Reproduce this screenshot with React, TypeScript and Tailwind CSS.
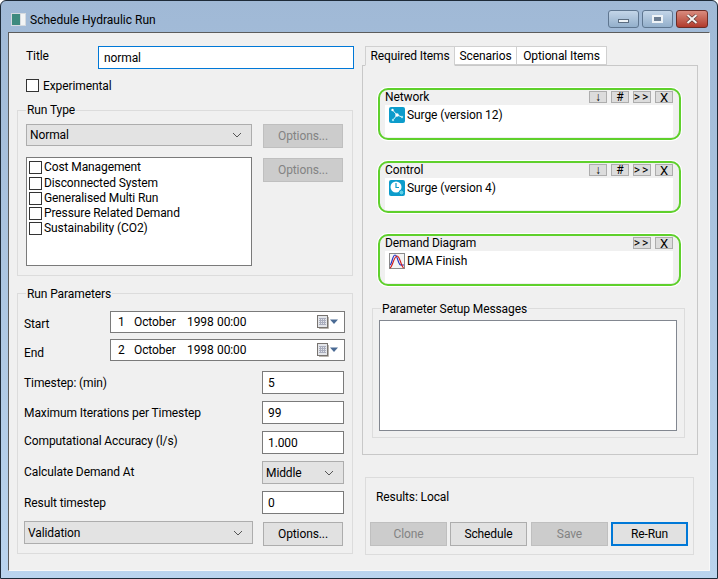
import type { ReactNode } from "react";

const Chevron = () => (
  <svg width="10" height="6" viewBox="0 0 10 6" className="shrink-0">
    <path d="M1 1l4 4 4-4" fill="none" stroke="#555" strokeWidth="1" />
  </svg>
);

const Check = ({ className = "" }: { className?: string }) => (
  <span className={`block w-[13px] h-[13px] shrink-0 bg-white border border-[#333] ${className}`} />
);

const Btn = ({ label, disabled, primary, className = "" }: { label: string; disabled?: boolean; primary?: boolean; className?: string }) => (
  <div
    className={`flex items-center justify-center h-[24px] shrink-0 border ${
      disabled
        ? "bg-[#cccccc] border-[#bfbfbf] text-[#838383]"
        : primary
          ? "bg-[#e1e1e1] border-2 border-[#0078d7] text-black"
          : "bg-[#e1e1e1] border-[#adadad] text-black"
    } ${className}`}
  >
    {label}
  </div>
);

const Select = ({ label, className = "" }: { label: string; className?: string }) => (
  <div className={`flex items-center justify-between bg-[#e3e3e3] border border-[#adadad] pl-[3px] pr-[9px] shrink-0 ${className}`}>
    <span>{label}</span>
    <Chevron />
  </div>
);

const TextBox = ({ value }: { value: string }) => (
  <div className="flex items-center w-[82px] h-[23px] bg-white border border-[#7a7a7a] pl-[5px] ml-auto">{value}</div>
);

const Group = ({ label, className = "", labelClass = "-top-[8px]", children }: { label: string; className?: string; labelClass?: string; children: ReactNode }) => (
  <div className={`relative border border-[#dcdcdc] ${className}`}>
    <span className={`absolute left-[8px] bg-[#f0f0f0] px-px ${labelClass}`}>{label}</span>
    {children}
  </div>
);

const CalendarIcon = () => (
  <svg width="22" height="14" viewBox="0 0 22 14" className="shrink-0">
    <rect x="0.5" y="0.5" width="10" height="12" fill="#e4e6ea" stroke="#77736f" />
    <path d="M11.5 2v11.5H2" fill="none" stroke="#b8b4ae" />
    <path d="M2 3.500h7M2 5.500h7M2 7.500h7M2 9.500h7M3.500 3v7M5.500 3v7M7.500 3v7" stroke="#a9adbd" strokeWidth="1" />
    <path d="M13 4.500h8l-4 4.500z" fill="#4a6a94" />
  </svg>
);

const DateBox = ({ day }: { day: string }) => (
  <div className="flex items-center w-[235px] h-[22px] bg-white border border-[#7a7a7a] pl-[7px] pr-[5px] ml-auto">
    <span className="w-[16px]">{day}</span>
    <span className="w-[53px]">October</span>
    <span className="w-[30px]">1998</span>
    <span>00:00</span>
    <span className="ml-auto flex"><CalendarIcon /></span>
  </div>
);

const Row = ({ label, children, width = "w-[320px]", labelClass = "" }: { label: string; children: ReactNode; width?: string; labelClass?: string }) => (
  <div className={`flex items-center ${width}`}>
    <span className={labelClass}>{label}</span>
    {children}
  </div>
);

const SmallBtn = ({ label, className = "" }: { label: string; className?: string }) => (
  <span className={`flex items-center justify-center w-[18px] h-[12px] bg-[#dcdcdc] border border-[#adadad] leading-none ${className}`}>
    {label}
  </span>
);

const NetworkIcon = () => (
  <svg width="16" height="16" viewBox="0 0 16 16" className="shrink-0">
    <rect width="16" height="16" rx="2" fill="#0c9ccb" />
    <path d="M3.500 3L8 8l5 2M8 8l-4 5" fill="none" stroke="#e8f8fc" strokeWidth="1" />
    <circle cx="8" cy="8" r="1.800" fill="#fff" />
    <circle cx="3.500" cy="3" r="1.200" fill="#fff" />
    <circle cx="13" cy="10" r="1.200" fill="#9fe4f2" />
    <circle cx="4" cy="13" r="1.200" fill="#9fe4f2" />
  </svg>
);

const ClockIcon = () => (
  <svg width="16" height="16" viewBox="0 0 16 16" className="shrink-0">
    <rect width="16" height="16" rx="2" fill="#0c9ccb" />
    <circle cx="7" cy="7" r="5.500" fill="#fff" />
    <path d="M7 3v4.500h3" fill="none" stroke="#0c9ccb" strokeWidth="1.200" />
    <circle cx="12.500" cy="12.500" r="2.400" fill="#5fd0e6" stroke="#0c9ccb" />
  </svg>
);

const CurveIcon = () => (
  <svg width="16" height="16" viewBox="0 0 16 16" className="shrink-0">
    <rect x="0.5" y="0.5" width="15" height="15" fill="#f4f4f4" stroke="#8a8a8a" />
    <path d="M1 12C3 11 3.500 2 6 2s3 9 5.500 10H15" fill="none" stroke="#1f2fc4" strokeWidth="1.200" />
    <path d="M1 15C3.500 14 5 3 8 3s3.500 9 6.500 12" fill="none" stroke="#d01818" strokeWidth="1.200" />
  </svg>
);

const ItemBox = ({ title, item, icon, full = true, className = "" }: { title: string; item: string; icon: ReactNode; full?: boolean; className?: string }) => (
  <div className={`w-[303px] h-[52px] border-2 border-[#5fd02c] rounded-[10px] shadow-[0_0_0_1px_#fff] pl-[5px] pr-[6px] ${className}`}>
    <div className="flex items-start justify-between h-[15px]">
      <span className="leading-[15px]">{title}</span>
      <div className="flex gap-[4px] mt-px">
        {full && <SmallBtn label="↓" />}
        {full && <SmallBtn label="#" />}
        <SmallBtn label=">>" className="tracking-[2px]" />
        <SmallBtn label="X" className="text-[13px]" />
      </div>
    </div>
    <div className="flex items-start gap-[2px] h-[32px] bg-white pl-[4px] pt-[2px]">
      {icon}
      <span className="leading-[16px]">{item}</span>
    </div>
  </div>
);

const checks = ["Cost Management", "Disconnected System", "Generalised Multi Run", "Pressure Related Demand", "Sustainability (CO2)"];

export default function App() {
  return (
    <div className="flex flex-col w-[718px] h-[579px] overflow-hidden rounded-t-[6px] border border-[#1d2a38] bg-gradient-to-b from-[#a0b9d6] to-[#bad4ee] font-['Roboto',sans-serif] text-[12px] leading-[16px] tracking-[-0.1px] text-black">
      {/* title bar */}
      <div className="flex items-start h-[31px] shrink-0 pl-[10px] pr-[9px]">
        <svg width="15" height="13" viewBox="0 0 15 13" className="mt-[12px] shrink-0">
          <rect width="15" height="13" fill="#d5dadf" />
          <rect x="1" y="1" width="8" height="11" fill="#3d8a7e" />
          <rect x="10" y="1" width="4" height="11" fill="#f2f4f5" />
        </svg>
        <span className="ml-[4px] mt-[11px] tracking-normal">Schedule Hydraulic Run</span>
        <div className="flex gap-[3px] ml-auto mt-[9px]">
          <div className="flex items-center justify-center w-[31px] h-[18px] rounded-[3px] border border-[#5f7690] bg-gradient-to-b from-[#c3d5e8] to-[#93afcb]">
            <span className="block w-[11px] h-[4px] mt-[3px] bg-[#eef3f7] border border-[#5a6c80]" />
          </div>
          <div className="flex items-center justify-center w-[31px] h-[18px] rounded-[3px] border border-[#5f7690] bg-gradient-to-b from-[#c3d5e8] to-[#93afcb]">
            <span className="block w-[11px] h-[8px] border-2 border-[#eef3f7] bg-[#6b7d92]" />
          </div>
          <div className="flex items-center justify-center w-[32px] h-[18px] rounded-[3px] border border-[#6b2c26] bg-gradient-to-b from-[#d98b7e] to-[#b03a2c]">
            <svg width="14" height="10" viewBox="0 0 14 10">
              <path d="M2.500 1l9 8M11.500 1l-9 8" stroke="#4a2a28" strokeWidth="3.200" />
              <path d="M2.500 1l9 8M11.500 1l-9 8" stroke="#f6f2f0" strokeWidth="2.200" />
            </svg>
          </div>
        </div>
      </div>

      {/* client area */}
      <div className="flex w-[702px] h-[539px] ml-[7px] shrink-0 border border-[#5c5c5c] border-r-[#f8f8f8] border-b-[#f8f8f8] bg-[#f0f0f0] pt-[13px] pl-[8px]">
        {/* left column */}
        <div className="flex flex-col w-[337px] shrink-0">
          <div className="flex items-center h-[23px] pl-[9px]">
            <span className="w-[72px] -mt-[3px]">Title</span>
            <div className="flex items-center w-[256px] h-[23px] bg-white border border-[#0078d7] pl-[5px]">normal</div>
          </div>
          <div className="flex items-center gap-[4px] h-[13px] mt-[10px] pl-[9px]">
            <Check />
            <span>Experimental</span>
          </div>

          <Group label="Run Type" labelClass="-top-[9px]" className="w-[336px] h-[166px] mt-[18px] pt-[13px] pl-[8px] flex">
            <div className="flex flex-col w-[226px]">
              <Select label="Normal" className="h-[22px] w-[226px]" />
              <div className="h-[109px] mt-[11px] bg-white border border-[#7a7a7a] pl-[2px] pt-[3px]">
                <div className="flex flex-col gap-[2px]">
                  {checks.map((c, i) => (
                    <div key={c} className={`flex items-center gap-[2px] h-[13px] ${i === 1 ? "mt-px" : ""}`}>
                      <Check />
                      <span className={i === 0 ? "-mt-[2px]" : "-mt-px"}>{c}</span>
                    </div>
                  ))}
                </div>
              </div>
            </div>
            <div className="flex flex-col ml-[11px]">
              <Btn label="Options..." disabled className="w-[80px]" />
              <Btn label="Options..." disabled className="w-[80px] mt-[10px]" />
            </div>
          </Group>

          <Group label="Run Parameters" className="w-[336px] h-[261px] mt-[17px] pt-[17px] pl-[6px]">
            <div className="flex flex-col">
              <Row label="Start" width="w-[321px]" labelClass="pt-[4px]"><DateBox day="1" /></Row>
              <div className="mt-[6px]">
                <Row label="End" width="w-[321px]" labelClass="pt-[6px]"><DateBox day="2" /></Row>
              </div>
              <div className="flex flex-col gap-[7px] mt-[10px]">
                <Row label="Timestep: (min)"><TextBox value="5" /></Row>
                <Row label="Maximum Iterations per Timestep"><TextBox value="99" /></Row>
                <Row label="Computational Accuracy (l/s)" labelClass="-mt-[3px]"><TextBox value="1.000" /></Row>
                <Row label="Calculate Demand At" labelClass="-mt-[2px]">
                  <Select label="Middle" className="h-[23px] w-[82px] ml-auto" />
                </Row>
                <Row label="Result timestep"><TextBox value="0" /></Row>
                <div className="flex items-start">
                  <Select label="Validation" className="h-[23px] w-[229px]" />
                  <Btn label="Options..." className="w-[80px] ml-[10px] mt-px" />
                </div>
              </div>
            </div>
          </Group>
        </div>

        {/* right column */}
        <div className="flex flex-col w-[336px] ml-[8px] shrink-0">
          <div className="flex h-[20px] pl-[3px] -mb-px relative z-10">
            <div className="flex items-center justify-center w-[90px] border border-[#d0d0d0] border-b-[#f0f0f0] bg-[#f0f0f0]">Required Items</div>
            <div className="flex items-center justify-center w-[62px] h-[19px] border border-l-0 border-[#d0d0d0] bg-white">Scenarios</div>
            <div className="flex items-center justify-center w-[90px] h-[19px] border border-l-0 border-[#d0d0d0] bg-white">Optional Items</div>
          </div>
          <div className="h-[390px] border border-[#c8c8c8] pt-[22px] pl-[15px]">
            <ItemBox title="Network" item="Surge (version 12)" icon={<NetworkIcon />} />
            <ItemBox title="Control" item="Surge (version 4)" icon={<ClockIcon />} className="mt-[21px]" />
            <ItemBox title="Demand Diagram" item="DMA Finish" icon={<CurveIcon />} full={false} className="mt-[21px]" />
            <Group label="Parameter Setup Messages" className="w-[313px] h-[130px] mt-[22px] -ml-[6px] pt-[11px] pl-[6px]">
              <div className="w-[298px] h-[111px] bg-white border border-[#828790]" />
            </Group>
          </div>
          <div className="w-[329px] h-[78px] mt-[22px] ml-[3px] border border-[#dcdcdc] pl-[4px]">
            <div className="h-[44px] pl-[6px] pt-[11px]">Results: Local</div>
            <div className="flex">
              <Btn label="Clone" disabled className="w-[77px]" />
              <Btn label="Schedule" className="w-[77px] ml-[3px]" />
              <Btn label="Save" disabled className="w-[77px] ml-[4px]" />
              <Btn label="Re-Run" primary className="w-[77px] ml-[3px]" />
            </div>
          </div>
        </div>
      </div>
    </div>
  );
}
